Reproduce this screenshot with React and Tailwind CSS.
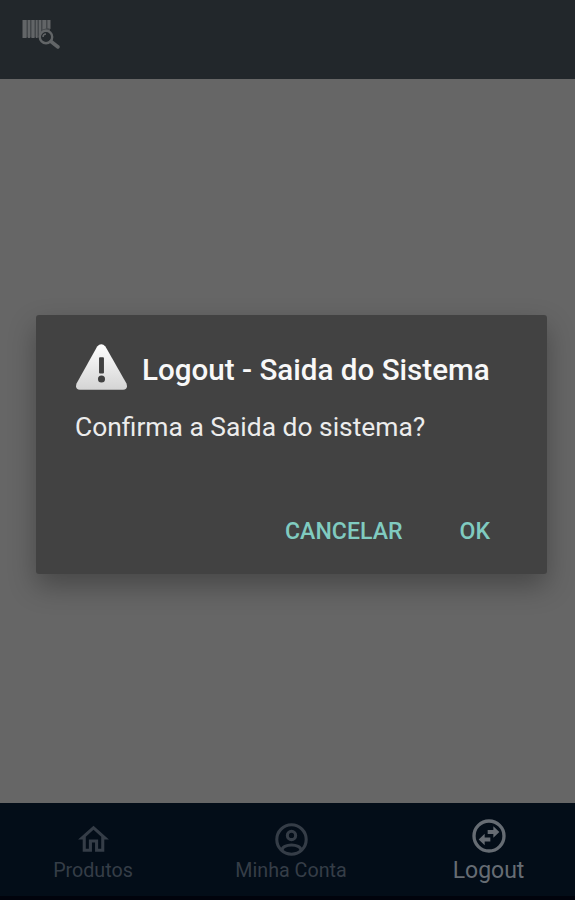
const tabs = [
  { label: 'Produtos', icon: HomeIcon, active: false },
  { label: 'Minha Conta', icon: AccountIcon, active: false },
  { label: 'Logout', icon: SwapIcon, active: true },
];

function BarcodeSearchIcon() {
  return (
    <svg className="w-[40px] h-[32px] text-[#626567]" viewBox="0 0 40 32" fill="none">
      <path fill="#43474a" d="M1 2h27v17.500H1z" />
      <path
        fill="currentColor"
        d="M.5 2h4v18h-4zM6 2h2v18h-2zM9.500 2h3v18h-3zM14 2h1.500v18h-1.500zM17 2h2v12l-2 3zM20.500 2h3.500v8.500l-3.500 1zM25.500 2h3v9l-3-1z"
      />
      <circle cx="24" cy="19" r="6.200" stroke="currentColor" strokeWidth="2.400" fill="#23282c" />
      <path d="M21 19a3 3 0 0 1 3-3" stroke="currentColor" strokeWidth="1.500" />
      <path d="M29 23.500l7 5.500" stroke="currentColor" strokeWidth="3.600" strokeLinecap="round" />
    </svg>
  );
}

function WarningIcon() {
  return (
    <svg className="w-[53px] h-[48px] shrink-0" viewBox="0 0 54 48">
      <defs>
        <linearGradient id="warning" x1="0" y1="0" x2="0" y2="1">
          <stop offset="0" stopColor="#ffffff" />
          <stop offset="1" stopColor="#d4d4d4" />
        </linearGradient>
      </defs>
      <path
        fill="url(#warning)"
        d="M22.600 3.200Q26.800-1.600 31 3.200L52.300 40.500Q54.500 46.500 49 47.200H5Q-.5 46.500 1.700 40.500z"
      />
      <rect x="24.500" y="14" width="5" height="16.500" rx="1" fill="#404040" />
      <circle cx="27" cy="36.200" r="3.600" fill="#404040" />
    </svg>
  );
}

function HomeIcon() {
  return (
    <svg className="w-[37px] h-[37px]" viewBox="0 0 24 24" fill="currentColor">
      <path d="M12 5.690l5 4.500V18h-2v-6H9v6H7v-7.810l5-4.500M12 3L2 12h3v8h6v-6h2v6h6v-8h3L12 3z" />
    </svg>
  );
}

function AccountIcon() {
  return (
    <svg className="w-[39px] h-[39px]" viewBox="0 0 24 24" fill="none" stroke="currentColor" strokeWidth="1.900">
      <circle cx="12" cy="12" r="9.050" />
      <circle cx="12" cy="9.500" r="2.550" />
      <path d="M6.200 18.500c0-1.800 2.700-3.100 5.800-3.100s5.800 1.300 5.800 3.100" />
    </svg>
  );
}

function SwapIcon() {
  return (
    <svg className="w-[40px] h-[40px]" viewBox="0 0 24 24">
      <circle cx="12" cy="12" r="9" fill="none" stroke="currentColor" strokeWidth="2" />
      <path
        fill="currentColor"
        d="M14.600 6.200L18.200 9.600l-3.600 3.400V10.800H11.200V8.400h3.400zM9.400 10.700V12.900h3.400v2.400H9.400v2.200L5.800 14.100z"
      />
    </svg>
  );
}

function LogoutDialog() {
  return (
    <div className="w-[511px] h-[259px] flex flex-col rounded-[3px] bg-[#424242] pl-[39px] pr-[57px] pt-[28px] shadow-[0_12px_28px_rgba(0,0,0,0.3)]">
      <div className="flex items-center gap-[14px]">
        <WarningIcon />
        <h2 className="pt-[6px] text-[29.600px] leading-[42px] font-medium whitespace-nowrap text-[#f8f8f8]">
          Logout - Saida do Sistema
        </h2>
      </div>
      <p className="mt-[19px] text-[26.400px] leading-[34px] whitespace-nowrap text-[#ececec]">
        Confirma a Saida do sistema?
      </p>
      <div className="mt-[72px] flex justify-end gap-[57px] text-[23.100px] leading-[32px] font-medium text-[#80cbc0]">
        <button>CANCELAR</button>
        <button>OK</button>
      </div>
    </div>
  );
}

export default function App() {
  return (
    <div className="w-[575px] h-[900px] flex flex-col overflow-hidden bg-[#666666] font-['Roboto',sans-serif]">
      <header className="h-[79px] shrink-0 bg-[#22272b] pl-[22px] pt-[18px]">
        <BarcodeSearchIcon />
      </header>

      <main className="h-[724px] shrink-0 pl-[36px] pt-[236px]">
        <LogoutDialog />
      </main>

      <nav className="h-[97px] shrink-0 grid grid-cols-[186px_210px_185px] border-b-4 border-[#01030c] bg-[#030d18]">
        {tabs.map(({ label, icon: Icon, active }) => (
          <div
            key={label}
            className={`flex flex-col items-center ${active ? 'pt-[13px] text-[#666c73]' : 'pt-[16px] text-[#353d47]'}`}
          >
            <div className="h-[40px] flex items-center">
              <Icon />
            </div>
            <span className={`whitespace-nowrap ${active ? 'mt-px text-[23px] leading-[28px]' : 'text-[19.700px] leading-[24px]'}`}>
              {label}
            </span>
          </div>
        ))}
      </nav>
    </div>
  );
}
